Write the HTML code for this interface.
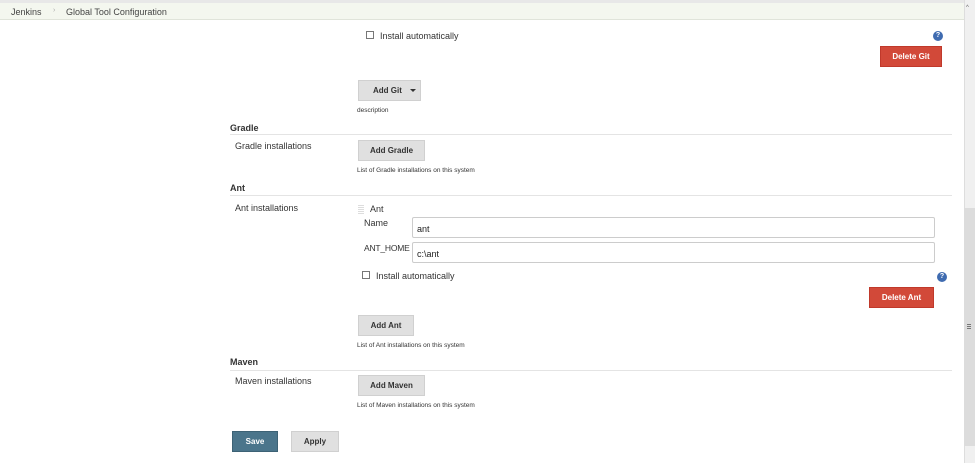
<!DOCTYPE html>
<html><head><style>
*{margin:0;padding:0;box-sizing:border-box}
body{width:975px;height:463px;background:#fff;font-family:"Liberation Sans",Arial,sans-serif;color:#333;position:relative;overflow:hidden}
.a{position:absolute}
.t{font-size:9px;white-space:nowrap}
.h{font-size:9px;font-weight:bold;white-space:nowrap}
.s{font-size:6.5px;white-space:nowrap}
.btn{position:absolute;background:#e0e0e0;border:1px solid #d0d0d0;font-size:8px;font-weight:bold;color:#333;display:flex;align-items:center;justify-content:center}
.red{position:absolute;background:#d24939;border:1px solid #c0392b;color:#fff;font-size:8px;font-weight:bold;display:flex;align-items:center;justify-content:center}
.line{position:absolute;height:1px;background:#e4e4e4;left:230px;width:722px}
.cb{position:absolute;width:8px;height:8px;border:1px solid #777;background:#fff}
.inp{position:absolute;border:1px solid #ccc;border-radius:2px;background:#fff;font-size:9px;padding:6px 4px;color:#222}
.help{position:absolute;width:10px;height:10px;border-radius:50%;background:#3f6bb0;color:#fff;font-size:7px;font-weight:bold;text-align:center;line-height:10px}
</style></head><body>
<div class="a" style="left:0;top:0;width:964px;height:3px;background:#e8e8e8"></div>
<div class="a" style="left:0;top:3px;width:964px;height:17px;background:#f4f7ef;border-bottom:1px solid #e0e4da"></div>
<div class="a t" style="left:11px;top:7px;color:#444">Jenkins</div>
<div class="a" style="left:53px;top:7px;font-size:7px;color:#aaa">›</div>
<div class="a t" style="left:66px;top:7px;color:#444">Global Tool Configuration</div>

<div class="cb" style="left:366px;top:31px"></div>
<div class="a t" style="left:380px;top:31px">Install automatically</div>
<div class="help" style="left:933px;top:31px">?</div>
<div class="red" style="left:880px;top:46px;width:62px;height:21px">Delete Git</div>
<div class="btn" style="left:358px;top:80px;width:63px;height:21px;justify-content:flex-start;padding-left:14px">Add Git<span style="position:absolute;left:51px;top:8px;width:0;height:0;border-left:3px solid transparent;border-right:3px solid transparent;border-top:3px solid #333"></span></div>
<div class="a s" style="left:357px;top:107px">description</div>

<div class="a h" style="left:230px;top:123px">Gradle</div>
<div class="line" style="top:134px"></div>
<div class="a t" style="left:235px;top:141px">Gradle installations</div>
<div class="btn" style="left:358px;top:140px;width:67px;height:21px">Add Gradle</div>
<div class="a s" style="left:357px;top:167px">List of Gradle installations on this system</div>

<div class="a h" style="left:230px;top:183px">Ant</div>
<div class="line" style="top:195px"></div>
<div class="a t" style="left:235px;top:203px">Ant installations</div>
<div class="a" style="left:358px;top:205px;width:6px;height:9px;background:repeating-linear-gradient(0deg,#ddd 0 1px,#fff 1px 2px)"></div>
<div class="a t" style="left:370px;top:204px">Ant</div>
<div class="a t" style="left:364px;top:218px">Name</div>
<div class="inp" style="left:412px;top:217px;width:523px;height:21px">ant</div>
<div class="a t" style="left:364px;top:243px;font-size:8.5px;letter-spacing:-0.2px">ANT_HOME</div>
<div class="inp" style="left:412px;top:242px;width:523px;height:21px">c:\ant</div>
<div class="cb" style="left:362px;top:271px"></div>
<div class="a t" style="left:376px;top:271px">Install automatically</div>
<div class="help" style="left:937px;top:272px">?</div>
<div class="red" style="left:869px;top:287px;width:65px;height:21px">Delete Ant</div>
<div class="btn" style="left:358px;top:315px;width:56px;height:21px">Add Ant</div>
<div class="a s" style="left:357px;top:342px">List of Ant installations on this system</div>

<div class="a h" style="left:230px;top:357px">Maven</div>
<div class="line" style="top:370px"></div>
<div class="a t" style="left:235px;top:376px">Maven installations</div>
<div class="btn" style="left:358px;top:375px;width:67px;height:21px">Add Maven</div>
<div class="a s" style="left:357px;top:402px">List of Maven installations on this system</div>

<div class="a" style="left:232px;top:431px;width:46px;height:21px;background:#4b758b;border:1px solid #3d6275;color:#fff;font-size:8px;font-weight:bold;display:flex;align-items:center;justify-content:center">Save</div>
<div class="btn" style="left:291px;top:431px;width:48px;height:21px">Apply</div>

<div class="a" style="left:964px;top:0;width:11px;height:463px;background:#f0f0f0;border-left:1px solid #ddd"></div>
<div class="a" style="left:966px;top:5px;font-size:6px;color:#666">^</div>
<div class="a" style="left:964px;top:208px;width:11px;height:238px;background:#dcdcdc"></div>
<div class="a" style="left:967px;top:324px;width:4px;height:5px;background:repeating-linear-gradient(0deg,#777 0 1px,transparent 1px 2px)"></div>
</body></html>
